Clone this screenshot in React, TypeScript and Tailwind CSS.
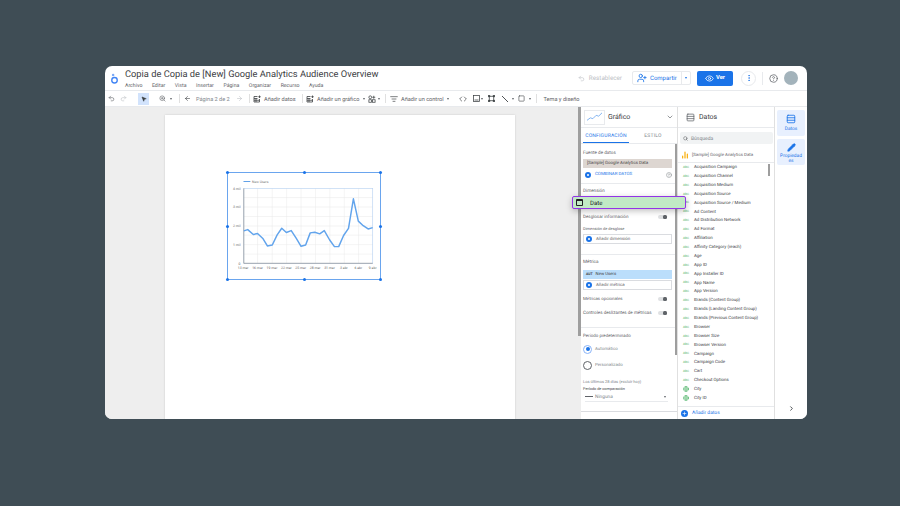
import { ArrowLeft, ArrowRight, BarChart2, ChevronDown, ChevronRight, Code, Eye, Globe, HelpCircle, ListFilter, MoreVertical, MousePointer2, Pencil, Plus, Redo2, Rows3, Search, Square, Undo2, UserPlus, ZoomIn } from "lucide-react";

const menuItems = ["Archivo", "Editar", "Vista", "Insertar", "Página", "Organizar", "Recurso", "Ayuda"];

const fields = [
  "Acquisition Campaign", "Acquisition Channel", "Acquisition Medium", "Acquisition Source",
  "Acquisition Source / Medium", "Ad Content", "Ad Distribution Network", "Ad Format", "Affiliation",
  "Affinity Category (reach)", "Age", "App ID", "App Installer ID", "App Name", "App Version",
  "Brands (Content Group)", "Brands (Landing Content Group)", "Brands (Previous Content Group)",
  "Browser", "Browser Size", "Browser Version", "Campaign", "Campaign Code", "Cart", "Checkout Options",
  "City", "City ID",
];

const linePoints = "68,198 80,194 97,209 110,206 127,222 140,244 155,241 170,210 184,190 198,203 213,197 228,220 243,245 257,241 271,204 285,202 300,207 314,197 330,225 345,246 358,246 373,212 388,190 403,100 418,168 433,182 448,192 462,188";
const xLabels = ["13 mar", "16 mar", "19 mar", "22 mar", "25 mar", "28 mar", "31 mar", "3 abr", "6 abr", "9 abr"];
const yLabels = [["4 mil", 68], ["3 mil", 125], ["2 mil", 183], ["1 mil", 240], ["0", 297]] as const;

function Handle({ className }: { className: string }) {
  return <span className={`absolute h-[3px] w-[3px] rounded-full bg-[#1a73e8] ${className}`} />;
}

function LineChart() {
  return (
    <div className="relative ml-[62px] mt-[57px] h-[108px] w-[154px] border border-[#6aa5ee]">
      <Handle className="-left-[2px] -top-[2px]" />
      <Handle className="left-[75px] -top-[2px]" />
      <Handle className="-right-[2px] -top-[2px]" />
      <Handle className="-left-[2px] top-[52px]" />
      <Handle className="-right-[2px] top-[52px]" />
      <Handle className="-left-[2px] -bottom-[2px]" />
      <Handle className="left-[75px] -bottom-[2px]" />
      <Handle className="-right-[2px] -bottom-[2px]" />
      <svg viewBox="21 21 462 324" className="h-full w-full">
        <line x1="67" y1="47" x2="88" y2="47" stroke="#5f9fe8" strokeWidth="3" />
        <text x="93" y="51" fontSize="10.5" fill="#777" fontFamily="Roboto, sans-serif">New Users</text>
        {[96, 125, 154, 183, 211, 240, 269].map((y) => (
          <line key={y} x1="68" y1={y} x2="462" y2={y} stroke="#e8e8e8" strokeWidth="1.5" />
        ))}
        {[110, 155, 199, 243, 287, 331, 375, 419].map((x) => (
          <line key={x} x1={x} y1="68" x2={x} y2="297" stroke="#e8e8e8" strokeWidth="1.5" />
        ))}
        <rect x="68" y="68" width="394" height="229" fill="none" stroke="#b9d3f2" strokeWidth="2" />
        <line x1="68" y1="297" x2="462" y2="297" stroke="#888" strokeWidth="2" />
        <line x1="68" y1="68" x2="68" y2="297" stroke="#888" strokeWidth="2" />
        <polyline points={linePoints} fill="none" stroke="#62a4ec" strokeWidth="4.5" strokeLinejoin="round" />
        {yLabels.map(([label, y]) => (
          <text key={label} x="58" y={y + 4} textAnchor="end" fontSize="10.5" fill="#666" fontFamily="Roboto, sans-serif">{label}</text>
        ))}
        {xLabels.map((label, i) => (
          <text key={label} x={66 + i * 44} y="315" textAnchor="middle" fontSize="10.5" fill="#666" fontFamily="Roboto, sans-serif">{label}</text>
        ))}
      </svg>
    </div>
  );
}

function Toggle() {
  return (
    <span className="relative ml-auto mr-[10px] block h-[4px] w-[9px] rounded-full bg-[#dfe1e3]">
      <span className="absolute right-0 top-0 h-[4px] w-[4px] rounded-[1.500px] bg-[#5f6368]" />
    </span>
  );
}

function AddButton({ label }: { label: string }) {
  return (
    <div className="ml-[2px] flex h-[10px] w-[89px] items-center gap-[4px] border border-[#dadce0] pl-[2px] text-[4.4px] text-[#5f6368]">
      <span className="flex h-[6px] w-[6px] items-center justify-center rounded-full bg-[#1a73e8]">
        <span className="h-[2px] w-[2px] rounded-full bg-white" />
      </span>
      <span className="pt-[2px]">{label}</span>
    </div>
  );
}

function SectionLabel({ text, className }: { text: string; className: string }) {
  return <div className={`ml-[2px] h-[6px] leading-[8px] text-[#5f6368] ${className}`}>{text}</div>;
}

function ChartPanel() {
  return (
    <div className="relative flex w-[97px] shrink-0 flex-col overflow-hidden border-r border-[#e0e0e0] bg-white">
      <span className="absolute right-0 top-[37px] h-[211px] w-[2px] bg-[#9e9e9e]" />
      <div className="flex h-[21px] items-center border-b border-[#e8eaed] px-[3px]">
        <div className="flex h-[15px] w-[21px] items-center justify-center border border-[#e8eaed]">
          <svg viewBox="0 0 20 12" className="h-[10px] w-[17px]">
            <polyline points="1,10 5,7 8,8 12,4 15,5 19,1" fill="none" stroke="#6aa5ee" strokeWidth="1" />
          </svg>
        </div>
        <span className="ml-[3px] text-[7px] text-[#3c4043]">Gráfico</span>
        <ChevronDown className="ml-auto h-[8px] w-[8px] text-[#5f6368]" />
      </div>
      <div className="flex h-[16px] border-b border-[#e8eaed] text-[5px] tracking-[0.2px]">
        <div className="ml-[2px] flex w-[46px] items-center justify-center border-b border-[#1a73e8] pt-[3px] text-[#1a73e8]">CONFIGURACIÓN</div>
        <div className="flex w-[48px] items-center justify-center pt-[3px] text-[#80868b]">ESTILO</div>
      </div>
      <SectionLabel text="Fuente de datos" className="mt-[6px] text-[4.6px]" />
      <div className="ml-[2px] mt-[3px] flex h-[9px] w-[89px] items-center bg-[#ddd6d1] pl-[4px] pt-[2px] text-[4.4px] text-[#444]">[Sample] Google Analytics Data</div>
      <div className="ml-[4px] mt-[2px] flex h-[9px] w-[87px] items-center gap-[4px] text-[4.4px] text-[#1a73e8]">
        <span className="flex h-[6px] w-[6px] items-center justify-center rounded-full bg-[#1a73e8]">
          <span className="h-[2px] w-[2px] rounded-full bg-white" />
        </span>
        <span className="pt-[2px]">COMBINAR DATOS</span>
        <HelpCircle className="ml-auto h-[6px] w-[6px] text-[#80868b]" />
      </div>
      <div className="mt-[4px] h-px bg-[#e8eaed]" />
      <SectionLabel text="Dimensión" className="mt-[4px] text-[4.6px]" />
      <div className="h-[20px]" />
      <div className="flex h-[6px] items-center">
        <SectionLabel text="Desglosar información" className="text-[4.5px]" />
        <Toggle />
      </div>
      <SectionLabel text="Dimensión de desglose" className="mt-[5px] text-[4px] text-[#3c4043]" />
      <div className="mt-[3px]"><AddButton label="Añadir dimensión" /></div>
      <div className="mt-[10px] h-px bg-[#e8eaed]" />
      <SectionLabel text="Métrica" className="mt-[4px] text-[4.6px]" />
      <div className="ml-[2px] mt-[5px] flex h-[9px] w-[89px] items-center gap-[3px] bg-[#bbdefb] pl-[3px] text-[4.3px] text-[#3c4043]">
        <span className="text-[3.4px] font-bold">AUT</span>
        <span className="pt-[2px]">New Users</span>
      </div>
      <div className="mt-[1px]"><AddButton label="Añadir métrica" /></div>
      <div className="mt-[6px] flex h-[6px] items-center">
        <SectionLabel text="Métricas opcionales" className="text-[4.4px]" />
        <Toggle />
      </div>
      <div className="mt-[8px] flex h-[6px] items-center">
        <SectionLabel text="Controles deslizantes de métricas" className="text-[4.55px]" />
        <Toggle />
      </div>
      <div className="mt-[11px] h-px bg-[#e8eaed]" />
      <SectionLabel text="Período predeterminado" className="mt-[5px] text-[4.45px]" />
      <div className="ml-[2px] mt-[5px] flex h-[10px] items-center gap-[3px] text-[4.4px] text-[#80868b]">
        <span className="flex h-[9px] w-[9px] items-center justify-center rounded-full border border-[#8ab4f8]">
          <span className="h-[4px] w-[4px] rounded-full bg-[#1a73e8]" />
        </span>
        <span className="pt-[2px]">Automático</span>
      </div>
      <div className="ml-[2px] mt-[6px] flex h-[10px] items-center gap-[3px] text-[4.4px] text-[#80868b]">
        <span className="h-[9px] w-[9px] rounded-full border border-[#5f6368]" />
        <span className="pt-[2px]">Personalizado</span>
      </div>
      <div className="ml-[2px] mt-[7px] h-[6px] text-[4.05px] leading-[9px] text-[#80868b]">Los últimos 28 días (excluir hoy)</div>
      <div className="ml-[2px] mt-[1px] h-[6px] text-[3.85px] leading-[9px] text-[#3c4043]">Período de comparación</div>
      <div className="ml-[4px] mt-[2px] flex h-[10px] w-[83px] items-center gap-[2px] border-b border-[#e8eaed] text-[4.8px] text-[#80868b]">
        <span className="h-px w-[8px] bg-[#5f6368]" />
        <span className="pt-[3px]">Ninguna</span>
        <span className="ml-auto mr-[2px] h-0 w-0 border-x-[1.5px] border-t-[2px] border-x-transparent border-t-[#5f6368]" />
      </div>
      <div className="mt-[9px] h-px bg-[#dadce0]" />
    </div>
  );
}

function DataPanel() {
  return (
    <div className="flex w-[97px] shrink-0 flex-col border-r border-[#e0e0e0] bg-white">
      <div className="flex h-[21px] items-center gap-[4px] border-b border-[#e8eaed] pl-[8px] text-[7px] text-[#3c4043]">
        <Rows3 className="h-[9px] w-[9px] text-[#5f6368]" />
        Datos
      </div>
      <div className="ml-[2px] mt-[4px] flex h-[12px] w-[93px] items-center gap-[3px] rounded-[2px] bg-[#f1f3f4] pl-[3px] text-[5px] text-[#80868b]">
        <Search className="h-[5px] w-[5px] text-[#3c4043]" />
        <span className="pt-[3px]">Búsqueda</span>
      </div>
      <div className="ml-[3px] mt-[4px] flex h-[14px] items-center gap-[3px] text-[4.4px] text-[#5f6368]">
        <BarChart2 className="h-[8px] w-[8px] text-[#f9ab00]" strokeWidth={3.5} />
        <span className="pt-[2px]">[Sample] Google Analytics Data</span>
      </div>
      <div className="relative flex-1 overflow-hidden border-t border-[#e8eaed]">
        <span className="absolute right-[4px] top-[1px] h-[12px] w-[2px] bg-[#9e9e9e]" />
        <div>
          {fields.map((name, i) => (
            <div key={name} className="flex h-[8.88px] items-center gap-[5px] pl-[5px] text-[4.4px] text-[#3c4043]">
              {i < 25 ? (
                <span className="w-[6px] text-[3px] font-bold leading-none text-[#7fc98f]">ABC</span>
              ) : (
                <Globe className="h-[6px] w-[6px] text-[#34a853]" />
              )}
              <span className="pt-[2px]">{name}</span>
            </div>
          ))}
        </div>
      </div>
      <div className="flex h-[13px] items-center gap-[4px] border-t border-[#e8eaed] pl-[3px] text-[4.9px] text-[#1a73e8]">
        <span className="flex h-[7px] w-[7px] items-center justify-center rounded-full bg-[#1a73e8]">
          <Plus className="h-[5px] w-[5px] text-white" strokeWidth={3} />
        </span>
        <span className="pt-[2px]">Añadir datos</span>
      </div>
    </div>
  );
}

function SideRail() {
  return (
    <div className="flex flex-1 flex-col items-center bg-white pt-[3px]">
      <div className="flex h-[26px] w-[28px] flex-col items-center justify-center gap-[2px] rounded-[2px] bg-[#e8f0fe] pt-[2px] text-[4.8px] text-[#1a73e8]">
        <Rows3 className="h-[10px] w-[10px]" />
        Datos
      </div>
      <div className="mt-[3px] flex h-[26px] w-[28px] flex-col items-center justify-center gap-[1px] rounded-[2px] bg-[#e8f0fe] pt-[2px] text-center text-[4.8px] leading-[5px] text-[#1a73e8]">
        <Pencil className="mb-[1px] h-[9px] w-[9px] fill-[#1a73e8]" />
        <span>Propiedad<br />es</span>
      </div>
      <ChevronRight className="mb-[7px] ml-[1px] mt-auto h-[7px] w-[7px] text-[#3c4043]" strokeWidth={3} />
    </div>
  );
}

function Sep({ className }: { className: string }) {
  return <span className={`h-[9px] w-px shrink-0 bg-[#e0e0e0] ${className}`} />;
}

function Caret({ className }: { className: string }) {
  return <span className={`h-0 w-0 shrink-0 border-x-[1.5px] border-t-[2px] border-x-transparent border-t-[#5f6368] ${className}`} />;
}

function AddDataIcon({ className }: { className: string }) {
  return (
    <svg viewBox="0 0 16 16" fill="none" stroke="#3c4043" strokeWidth="1.6" className={`h-[8px] w-[8px] shrink-0 ${className}`}>
      <path d="M9 3H2v11h11V8" />
      <path d="M2 7h7M2 10.500h11M6 7v7" />
      <path d="M13 1v5M10.500 3.500h5" />
    </svg>
  );
}

function Toolbar() {
  return (
    <div className="flex h-[17px] items-center whitespace-nowrap border-y border-[#e8eaed] pl-[3px] text-[5.6px] text-[#5f6368]">
      <Undo2 className="h-[7px] w-[7px] shrink-0" />
      <Redo2 className="ml-[5px] h-[7px] w-[7px] shrink-0 text-[#bdc1c6]" />
      <span className="ml-[11px] flex h-[12px] w-[11px] shrink-0 items-center justify-center bg-[#d2e3fc]">
        <MousePointer2 className="h-[6px] w-[6px] fill-[#3c4043] text-[#3c4043]" />
      </span>
      <ZoomIn className="ml-[9.5px] h-[7px] w-[7px] shrink-0" />
      <Caret className="ml-[4.5px]" />
      <Sep className="ml-[7px]" />
      <ArrowLeft className="ml-[3.5px] h-[7px] w-[7px] shrink-0 text-[#3c4043]" />
      <span className="ml-[5.5px] w-[33px] pt-[3px] text-[#80868b]">Página 2 de 2</span>
      <ArrowRight className="ml-[6.5px] h-[7px] w-[7px] shrink-0 text-[#bdc1c6]" />
      <Sep className="ml-[6.5px]" />
      <AddDataIcon className="ml-[3px]" />
      <span className="ml-[3px] w-[32px] pt-[3px]">Añadir datos</span>
      <Sep className="ml-[6px]" />
      <AddDataIcon className="ml-[3px]" />
      <span className="ml-[3px] w-[43px] pt-[3px]">Añadir un gráfico</span>
      <Caret className="ml-[2.5px]" />
      <svg viewBox="0 0 16 16" fill="none" stroke="#3c4043" strokeWidth="1.5" className="ml-[3.5px] h-[8px] w-[8px] shrink-0">
        <circle cx="4.500" cy="4.500" r="2.800" />
        <path d="M11.500 1.500v6M8.500 4.500h6" />
        <rect x="1.800" y="9.500" width="5.400" height="5" />
        <rect x="8.800" y="9.500" width="5.400" height="5" />
      </svg>
      <Caret className="ml-[2px]" />
      <Sep className="ml-[5px]" />
      <ListFilter className="ml-[4px] h-[8px] w-[8px] shrink-0 text-[#3c4043]" />
      <span className="ml-[3px] w-[44px] pt-[3px]">Añadir un control</span>
      <Caret className="ml-[2px]" />
      <Code className="ml-[10px] h-[8px] w-[8px] shrink-0 text-[#3c4043]" />
      <svg viewBox="0 0 14 14" fill="none" stroke="#3c4043" strokeWidth="1.5" className="ml-[5.5px] h-[7px] w-[7px] shrink-0">
        <rect x="1" y="1" width="12" height="12" />
        <path d="M3 10h8" />
      </svg>
      <Caret className="ml-[1.5px]" />
      <svg viewBox="0 0 14 14" fill="none" stroke="#3c4043" strokeWidth="1.5" className="ml-[5px] h-[7px] w-[7px] shrink-0">
        <rect x="2.500" y="2.500" width="9" height="9" />
        <path d="M0.500 0.500h3v3h-3zM10.500 0.500h3v3h-3zM0.500 10.500h3v3h-3zM10.500 10.500h3v3h-3z" fill="#3c4043" />
      </svg>
      <svg viewBox="0 0 16 16" fill="none" stroke="#3c4043" strokeWidth="1.8" className="ml-[5.5px] h-[8px] w-[8px] shrink-0">
        <path d="M2 2l12 12" />
      </svg>
      <Caret className="ml-[3px]" />
      <Square className="ml-[4.5px] h-[7px] w-[7px] shrink-0 text-[#3c4043]" />
      <Caret className="ml-[3.5px]" />
      <Sep className="ml-[5px]" />
      <span className="ml-[7px] pt-[3px]">Tema y diseño</span>
    </div>
  );
}

function Header() {
  return (
    <div className="flex h-[24px] items-center pl-[5px] pr-[9px]">
      <svg viewBox="0 0 12 16" className="h-[11px] w-[9px]">
        <circle cx="6" cy="10.500" r="4" fill="none" stroke="#4285f4" strokeWidth="2" />
        <circle cx="4" cy="3" r="1.800" fill="#7baaf7" />
      </svg>
      <div className="ml-[6px] flex flex-col">
        <div className="h-[12px] text-[9.3px] leading-[14px] text-[#3c4043]">Copia de Copia de [New] Google Analytics Audience Overview</div>
        <div className="mt-[1px] flex h-[7px] gap-[9.500px] text-[5.2px] leading-[10px] text-[#5f6368]">
          {menuItems.map((item) => <span key={item}>{item}</span>)}
        </div>
      </div>
      <div className="ml-auto flex items-center gap-[4px] text-[6.3px] text-[#bdc1c6]">
        <Undo2 className="h-[7px] w-[7px]" />
        <span className="pt-[1px]">Restablecer</span>
      </div>
      <div className="ml-[10px] flex h-[14px] w-[59px] items-center rounded-[2px] border border-[#e8eaed] pl-[4px] text-[6px] text-[#1a73e8]">
        <UserPlus className="mr-[3px] h-[10px] w-[10px]" />
        Compartir
        <span className="ml-auto flex h-full w-[9px] items-center justify-center border-l border-[#e8eaed]">
          <span className="h-0 w-0 border-x-[1.5px] border-t-[2px] border-x-transparent border-t-[#1a73e8]" />
        </span>
      </div>
      <div className="ml-[6px] flex h-[15px] w-[36px] items-center justify-center gap-[2px] rounded-[2px] bg-[#1a73e8] text-[5.8px] font-bold text-white">
        <Eye className="h-[9px] w-[9px]" />
        Ver
      </div>
      <span className="ml-[8px] flex h-[15px] w-[15px] items-center justify-center rounded-full border border-[#e8eaed]">
        <MoreVertical className="h-[8px] w-[8px] text-[#1a73e8]" />
      </span>
      <span className="ml-[6px] h-[13px] w-px bg-[#e8eaed]" />
      <HelpCircle className="ml-[6px] h-[9px] w-[9px] text-[#5f6368]" />
      <span className="ml-[6px] h-[14px] w-[14px] rounded-full bg-[#a3b3bb]" />
    </div>
  );
}

export default function App() {
  return (
    <div className="flex h-[506px] w-[900px] items-start bg-[#3f4d55] pl-[105px] pt-[66px] font-['Roboto',sans-serif] [text-rendering:geometricPrecision]">
      <div className="relative flex h-[353px] w-[702px] flex-col overflow-hidden rounded-[7px] bg-white">
        <Header />
        <Toolbar />
        <div className="flex flex-1 overflow-hidden">
          <div className="flex w-[476px] shrink-0 justify-between bg-[#eeeeee] pl-[60px]">
            <div className="mt-[8px] h-[400px] w-[350px] bg-white shadow-[0_0_2px_rgba(0,0,0,0.15)]">
              <LineChart />
            </div>
            <span className="h-[229px] w-[3px] bg-[#9e9e9e]" />
          </div>
          <ChartPanel />
          <DataPanel />
          <SideRail />
        </div>
        {/* Dragged field */}
        <div className="absolute left-[467px] top-[130px] flex h-[13px] w-[114px] items-center rounded-[2px] border-[1.5px] border-[#9334e6] bg-[#c1eac5] pl-[3px] text-[6px] text-[#202124] shadow-[0_2px_6px_rgba(0,0,0,0.25)]">
          <span className="flex h-[7px] w-[7px] flex-col rounded-[1px] bg-[#202124] p-[1px] pt-[2px]">
            <span className="h-full w-full bg-[#c1eac5]" />
          </span>
          <span className="ml-[7px] pt-[1px]">Date</span>
        </div>
      </div>
    </div>
  );
}
